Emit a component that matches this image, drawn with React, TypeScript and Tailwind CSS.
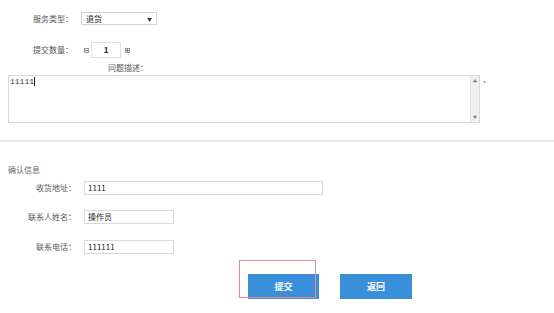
import React from 'react';

const cjk = { fontFamily: '"Noto Sans CJK SC", "Noto Sans", sans-serif' };

const FieldRow = ({ label, value, width, mt }: { label: string; value: string; width: string; mt: string }) => (
    <div className={`flex items-center h-[14px] ${mt}`}>
        <div className="w-[76px] text-right text-[8px] leading-[10px] text-[#555]">{label}</div>
        <div className={`ml-[8px] h-[14px] ${width} border border-[#d8d8d8] bg-white flex items-center pl-[3px] text-[8px] text-[#222]`}>
            {value}
        </div>
    </div>
);

export default function App() {
    return (
        <div className="relative w-[554px] h-[313px] bg-white overflow-hidden" style={cjk}>
            <div className="pt-[12px]">
                {/* service type */}
                <div className="flex items-center h-[13px]">
                    <div className="ml-[33px] w-[48px] text-[8px] leading-[10px] text-[#555]">服务类型：</div>
                    <div className="w-[76px] h-[13px] border border-[#d4d4d4] bg-white flex items-center justify-between px-[4px] text-[8px] text-[#222]">
                        <span>退货</span>
                        <span className="text-[5px] text-[#333]">▼</span>
                    </div>
                </div>

                {/* quantity */}
                <div className="flex items-center h-[16px] mt-[17px]">
                    <div className="ml-[33px] w-[51px] text-[8px] leading-[10px] text-[#555]">提交数量：</div>
                    <div className="w-[5px] h-[5px] border border-[#999] flex items-center justify-center">
                        <div className="w-[3px] h-[1px] bg-[#777]" />
                    </div>
                    <div className="ml-[2px] w-[30px] h-[16px] border border-[#e0e0e0] flex items-center justify-center text-[8px] font-bold text-[#222]">1</div>
                    <div className="ml-[4px] w-[5px] h-[5px] border border-[#999] flex items-center justify-center relative">
                        <div className="w-[3px] h-[1px] bg-[#777]" />
                        <div className="absolute w-[1px] h-[3px] bg-[#777]" />
                    </div>
                </div>

                <div className="ml-[108px] mt-[5px] h-[10px] text-[8px] leading-[10px] text-[#555]">问题描述：</div>

                {/* description */}
                <div className="flex mt-[2px] ml-[8px]">
                    <div className="w-[472px] h-[48px] border border-[#d8d8d8] flex">
                        <div className="flex-1 pl-[1px] pt-[1px] text-[8px] leading-[10px] text-[#333]" style={{ fontFamily: '"Liberation Mono", monospace' }}>
                            11111<span className="inline-block w-[1px] h-[9px] bg-[#222] align-middle" />
                        </div>
                        <div className="w-[9px] h-full bg-[#f0f0f0] border-l border-[#e4e4e4] flex flex-col items-center justify-between py-[3px]">
                            <span className="text-[4px] leading-[4px] text-[#777]">▲</span>
                            <span className="text-[4px] leading-[4px] text-[#777]">▼</span>
                        </div>
                    </div>
                    <span className="ml-[3px] mt-[5px] text-[7px] leading-[7px] text-[#e05050]">*</span>
                </div>

                <div className="mt-[17px] h-[2px] bg-[#e8e8e8]" />

                <div className="ml-[8px] mt-[23px] h-[10px] text-[8px] leading-[10px] text-[#666]">确认信息</div>

                <FieldRow label="收货地址：" value="1111" width="w-[239px]" mt="mt-[6px]" />
                <FieldRow label="联系人姓名：" value="操作员" width="w-[90px]" mt="mt-[15px]" />
                <FieldRow label="联系电话：" value="111111" width="w-[90px]" mt="mt-[16px]" />

                <div className="flex mt-[20px] ml-[248px] gap-[21px]">
                    <button className="w-[71px] h-[25px] bg-[#3a8fda] text-white text-[9px] font-bold">提交</button>
                    <button className="w-[72px] h-[25px] bg-[#3a8fda] text-white text-[9px] font-bold">返回</button>
                </div>
            </div>

            <div className="absolute left-[239px] top-[260px] w-[77px] h-[38px] border border-[#f08a8a]" />
        </div>
    );
}
